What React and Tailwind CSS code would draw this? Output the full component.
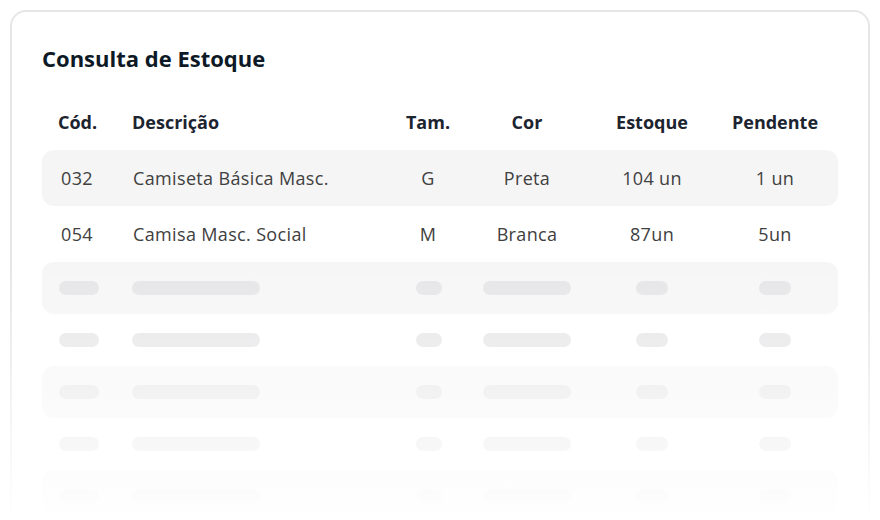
const rows = [
  { cod: "032", desc: "Camiseta Básica Masc.", tam: "G", cor: "Preta", estoque: "104 un", pendente: "1 un" },
  { cod: "054", desc: "Camisa Masc. Social", tam: "M", cor: "Branca", estoque: "87un", pendente: "5un" },
];

const cols = "grid grid-cols-[90px_262px_68px_130px_120px_126px]";

function SkeletonRow({ shaded }) {
  return (
    <div className={`${cols} h-[52px] items-center rounded-xl ${shaded ? "bg-[#f6f6f6]" : ""}`}>
      <div className="pl-[17px]">
        <div className="h-[14px] w-[40px] rounded-full bg-[#e5e5e7]" />
      </div>
      <div>
        <div className="h-[14px] w-[128px] rounded-full bg-[#e5e5e7]" />
      </div>
      <div className="flex justify-center pl-[2px]">
        <div className="h-[14px] w-[26px] rounded-full bg-[#e5e5e7]" />
      </div>
      <div className="flex justify-center">
        <div className="h-[14px] w-[88px] rounded-full bg-[#e5e5e7]" />
      </div>
      <div className="flex justify-center">
        <div className="h-[14px] w-[32px] rounded-full bg-[#e5e5e7]" />
      </div>
      <div className="flex justify-center pr-[1px]">
        <div className="h-[14px] w-[32px] rounded-full bg-[#e5e5e7]" />
      </div>
    </div>
  );
}

export default function App() {
  return (
    <div className="h-[520px] w-[880px] overflow-hidden bg-white p-[10px] font-['Open_Sans',sans-serif]">
      <div className="relative h-[600px] w-[860px] rounded-2xl border-2 border-[#e6e6e6] px-[30px] pt-[32px]">
        <h1 className="text-[22px] leading-[28px] font-bold text-[#0d1a26]">Consulta de Estoque</h1>

        <div className={`${cols} mt-[22px] h-[56px] items-center text-[18px] font-bold text-[#1c2430]`}>
          <div className="pl-[16px]">Cód.</div>
          <div>Descrição</div>
          <div className="text-center">Tam.</div>
          <div className="text-center">Cor</div>
          <div className="text-center">Estoque</div>
          <div className="text-center">Pendente</div>
        </div>

        {rows.map((r, i) => (
          <div
            key={r.cod}
            className={`${cols} h-[56px] items-center rounded-xl text-[18px] tracking-[0.35px] text-[#404040] ${i % 2 === 0 ? "bg-[#f5f5f5]" : ""}`}
          >
            <div className="pl-[19px]">{r.cod}</div>
            <div className="pl-[1px]">{r.desc}</div>
            <div className="text-center">{r.tam}</div>
            <div className="text-center">{r.cor}</div>
            <div className="text-center">{r.estoque}</div>
            <div className="text-center">{r.pendente}</div>
          </div>
        ))}

        {[true, false, true, false, true, false].map((s, i) => (
          <SkeletonRow key={i} shaded={s} />
        ))}

        {/* fade out the placeholder rows */}
        <div className="pointer-events-none absolute inset-x-[-4px] top-[250px] bottom-[-4px] bg-linear-to-b from-white/0 to-white to-[75%]" />
      </div>
    </div>
  );
}
